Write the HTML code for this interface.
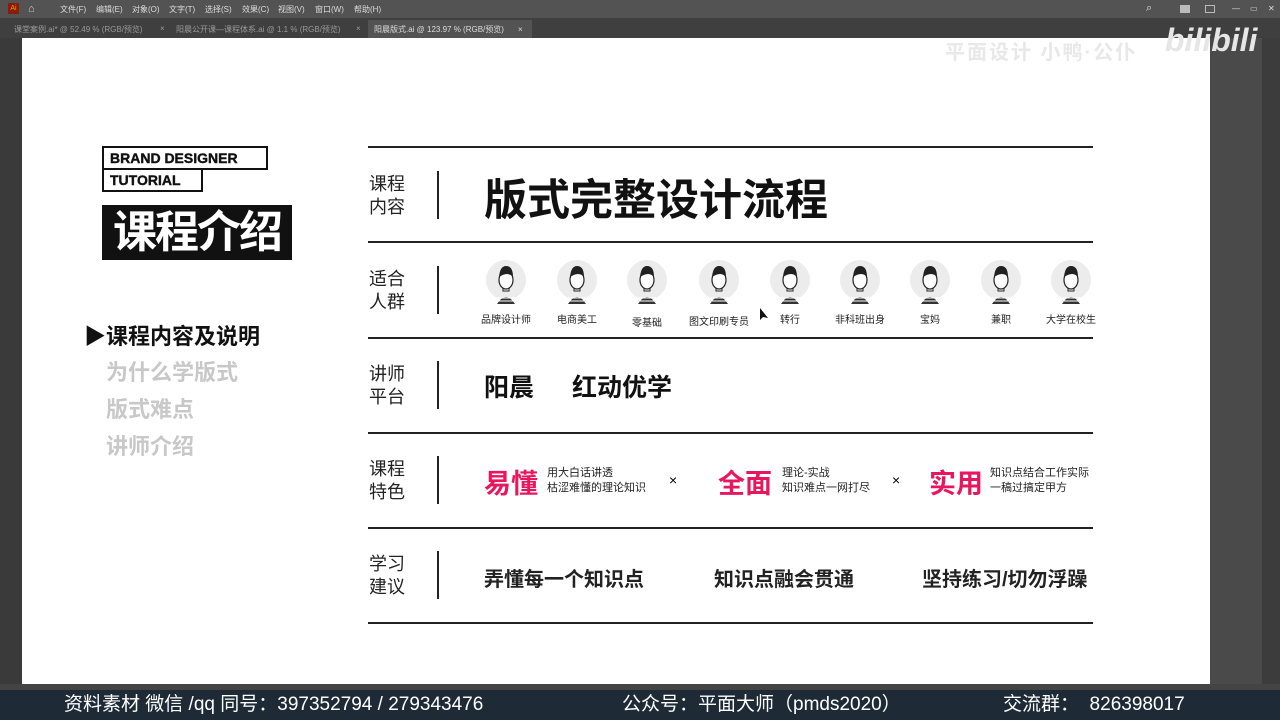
<!DOCTYPE html>
<html><head><meta charset="utf-8"><style>
*{margin:0;padding:0;box-sizing:border-box}
body{width:1280px;height:720px;overflow:hidden;background:#535353;font-family:"Liberation Sans","Noto Sans CJK SC",sans-serif;position:relative}
.a{position:absolute}
.menu{top:0;left:0;width:1280px;height:18px;background:#535353;color:#ddd;font-size:8px}
.menu span{position:absolute;top:4px}
.tabs{top:18px;left:0;width:1280px;height:20px;background:#3f3f3f;font-size:8px;color:#999}
.canvas{top:38px;left:22px;width:1188px;height:646px;background:#fff}
.hl{height:2px;background:#222;left:368px;width:725px}
.lab{left:369px;font-size:18px;line-height:23px;color:#222}
.vl{left:437px;width:2px;height:48px;background:#222}
.gray{color:#c8c8c8;font-weight:bold;font-size:22px;left:106px}
.av{width:40px;height:40px;border-radius:50%;background:#ececec;top:260px}
.avl{top:311px;font-size:10px;color:#222;width:80px;text-align:center}
.red{color:#e8175d;font-weight:bold;font-size:27px;top:462px}
.sm{font-size:11px;line-height:15px;color:#222;top:466px}
.bold{font-weight:bold;font-size:20px;color:#222;top:563px}
</style></head><body>
<div class="a menu"><span style="left:8px;top:3px;width:11px;height:11px;background:#8b1c0c;color:#f90;font-size:7px;text-align:center;line-height:11px">Ai</span><span style="left:28px;top:3px;color:#ccc;font-size:11px">⌂</span>
<span style="left:60px">文件(F)</span><span style="left:96px">编辑(E)</span><span style="left:132px">对象(O)</span><span style="left:169px">文字(T)</span><span style="left:205px">选择(S)</span><span style="left:242px">效果(C)</span><span style="left:278px">视图(V)</span><span style="left:315px">窗口(W)</span><span style="left:354px">帮助(H)</span>
<span style="left:1146px;font-size:11px;top:2px">⌕</span><span style="left:1180px;top:5px;width:10px;height:8px;background:#bbb"></span><span style="left:1205px;top:5px;width:10px;height:8px;border:1px solid #bbb"></span><span style="left:1232px">—</span><span style="left:1250px">▭</span><span style="left:1268px">✕</span></div>
<div class="a tabs"><span class="a" style="left:14px;top:6px">课堂案例.ai* @ 52.49 % (RGB/预览)</span><span class="a" style="left:160px;top:6px">×</span><span class="a" style="left:176px;top:6px">阳晨公开课—课程体系.ai @ 1.1 % (RGB/预览)</span><span class="a" style="left:356px;top:6px">×</span>
<div class="a" style="left:368px;top:2px;width:164px;height:18px;background:#535353;color:#ddd;padding:4px 6px">阳晨版式.ai @ 123.97 % (RGB/预览)<span style="margin-left:14px">×</span></div></div>
<div class="a" style="left:0;top:38px;width:22px;height:646px;background:#3a3a3a"></div>
<div class="a canvas"></div>
<div class="a" style="left:1210px;top:38px;width:70px;height:646px;background:#4a4a4a"></div>
<div class="a" style="left:1262px;top:38px;width:18px;height:646px;background:#3c3c3c"></div>
<div class="a" style="left:945px;top:36px;font-size:20px;font-weight:bold;color:#e8e8e8;letter-spacing:2px">平面设计 小鸭·公仆</div>
<div class="a" style="left:1165px;top:22px;font-size:32px;font-weight:bold;color:#e6e6e6;font-style:italic">bilibili</div>

<div class="a" style="left:102px;top:146px;width:166px;height:24px;border:2px solid #111;font-weight:900;font-size:14px;padding:2px 6px;color:#111;-webkit-text-stroke:0.4px #111">BRAND DESIGNER</div>
<div class="a" style="left:102px;top:168px;width:101px;height:24px;border:2px solid #111;font-weight:900;font-size:14px;padding:2px 6px;color:#111;-webkit-text-stroke:0.4px #111">TUTORIAL</div>
<div class="a" style="left:102px;top:205px;width:190px;height:55px;background:#111;color:#fff;font-weight:bold;font-size:44px;line-height:55px;text-align:center;letter-spacing:-2px">课程介绍</div>
<div class="a" style="left:84px;top:319px;font-weight:bold;font-size:22px;color:#111">▶课程内容及说明</div>
<div class="a gray" style="top:355px">为什么学版式</div>
<div class="a gray" style="top:392px">版式难点</div>
<div class="a gray" style="top:429px">讲师介绍</div>

<div class="a hl" style="top:146px"></div><div class="a hl" style="top:241px"></div><div class="a hl" style="top:337px"></div><div class="a hl" style="top:432px"></div><div class="a hl" style="top:527px"></div><div class="a hl" style="top:622px"></div>
<div class="a lab" style="top:173px">课程<br>内容</div><div class="a vl" style="top:171px"></div>
<div class="a lab" style="top:268px">适合<br>人群</div><div class="a vl" style="top:266px"></div>
<div class="a lab" style="top:363px">讲师<br>平台</div><div class="a vl" style="top:361px"></div>
<div class="a lab" style="top:458px">课程<br>特色</div><div class="a vl" style="top:456px"></div>
<div class="a lab" style="top:553px">学习<br>建议</div><div class="a vl" style="top:551px"></div>
<div class="a" style="left:484px;top:166px;font-size:43px;font-weight:bold;color:#111">版式完整设计流程</div>
<div class="a" style="left:484px;top:368px;font-size:25px;font-weight:bold;color:#111">阳晨<span style="margin-left:38px">红动优学</span></div>

<div class="a av" style="left:486px"></div><div class="a av" style="left:557px"></div><div class="a av" style="left:627px"></div><div class="a av" style="left:699px"></div><div class="a av" style="left:770px"></div><div class="a av" style="left:840px"></div><div class="a av" style="left:910px"></div><div class="a av" style="left:981px"></div><div class="a av" style="left:1051px"></div>
<svg class="a" style="left:0;top:0" width="1280" height="720">
<defs><g id="p"><path d="M497 304 Q506 290 515 304Z" fill="#333"/><rect x="503" y="285" width="6" height="6" fill="#fff" stroke="#222"/><ellipse cx="506" cy="280" rx="7" ry="9" fill="#fff" stroke="#222" stroke-width="1.2"/><path d="M499 277 Q500 266 506 266 Q513 266 513 277 Q508 271 499 277Z" fill="#222"/><path d="M497 298 h18 M496 301 h20" stroke="#fff" stroke-width="1"/></g></defs>
<use href="#p"/><use href="#p" x="71"/><use href="#p" x="141"/><use href="#p" x="213"/><use href="#p" x="284"/><use href="#p" x="354"/><use href="#p" x="424"/><use href="#p" x="495"/><use href="#p" x="565"/>
<path d="M760 308 l0 12 l3 -3 l5 1 z" fill="#111"/>
</svg>
<div class="a avl" style="left:466px">品牌设计师</div><div class="a avl" style="left:537px">电商美工</div><div class="a avl" style="left:607px;top:314px">零基础</div><div class="a avl" style="left:679px;top:313px">图文印刷专员</div><div class="a avl" style="left:750px">转行</div><div class="a avl" style="left:820px">非科班出身</div><div class="a avl" style="left:890px">宝妈</div><div class="a avl" style="left:961px">兼职</div><div class="a avl" style="left:1031px">大学在校生</div>

<div class="a red" style="left:484px">易懂</div><div class="a sm" style="left:547px">用大白话讲透<br>枯涩难懂的理论知识</div><div class="a" style="left:669px;top:472px;font-size:14px">×</div>
<div class="a red" style="left:718px">全面</div><div class="a sm" style="left:782px">理论-实战<br>知识难点一网打尽</div><div class="a" style="left:892px;top:472px;font-size:14px">×</div>
<div class="a red" style="left:929px">实用</div><div class="a sm" style="left:990px">知识点结合工作实际<br>一稿过搞定甲方</div>
<div class="a bold" style="left:484px">弄懂每一个知识点</div><div class="a bold" style="left:714px">知识点融会贯通</div><div class="a bold" style="left:922px">坚持练习/切勿浮躁</div>

<div class="a" style="left:0;top:684px;width:1280px;height:8px;background:#444"></div>
<div class="a" style="left:0;top:690px;width:1280px;height:30px;background:#1e2b36;color:#fff;font-size:19px;line-height:30px;white-space:nowrap">
<span class="a" style="left:64px">资料素材 微信 /qq 同号：397352794 / 279343476</span><span class="a" style="left:622px">公众号：平面大师（pmds2020）</span><span class="a" style="left:1003px">交流群：&nbsp;&nbsp;826398017</span></div>
</body></html>
